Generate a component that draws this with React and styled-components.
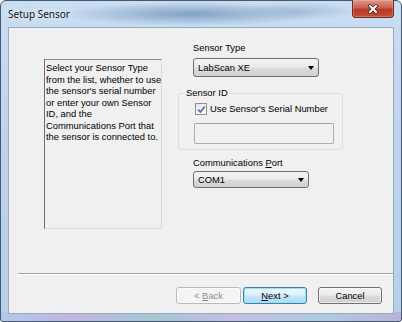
import styled, { createGlobalStyle } from "styled-components";

const GlobalStyle = createGlobalStyle`
  html, body {
    margin: 0;
    padding: 0;
    background: #ffffff;
  }
  body {
    width: 402px;
    height: 322px;
    overflow: hidden;
    font-family: "Liberation Sans", Arial, sans-serif;
  }
`;

const Window = styled.div`
  box-sizing: border-box;
  width: 402px;
  height: 322px;
  border: 1px solid #46586d;
  border-radius: 6px 6px 3px 3px;
  padding: 0 7px 7px 7px;
  display: flex;
  flex-direction: column;
  background:
    linear-gradient(90deg, #b3c8e9, #c0b6e0 18%, #a4c6d3 38%, #c5bde3 58%, #aecddf 78%, #bcb2dd) bottom / 100% 9px no-repeat,
    radial-gradient(ellipse 130px 12px at 190px 13px, rgba(100, 135, 172, 0.7), rgba(100, 135, 172, 0)),
    radial-gradient(ellipse 60px 9px at 300px 10px, rgba(120, 150, 185, 0.4), rgba(120, 150, 185, 0)),
    linear-gradient(180deg, #cadef3, #bed4ed 40%, #b7cfe9);
`;

const TitleBar = styled.div`
  height: 26px;
  display: flex;
  align-items: flex-start;
`;

const Title = styled.div`
  padding-top: 6px;
  font-family: "Noto Sans", "Liberation Sans", sans-serif;
  font-size: 10px;
  color: #161616;
  text-shadow: 0 0 6px rgba(255, 255, 255, 0.9);
`;

const CloseButton = styled.div`
  margin-left: auto;
  margin-top: -1px;
  width: 42px;
  height: 18px;
  box-sizing: border-box;
  border: 1px solid #6b2a22;
  border-top: none;
  border-radius: 0 0 4px 4px;
  background: linear-gradient(180deg, #dc9a90 0%, #c9604f 45%, #b83a28 55%, #c44f37 100%);
  box-shadow: inset 0 0 0 1px rgba(255, 200, 190, 0.3);
  display: flex;
  align-items: center;
  justify-content: center;
`;

const Client = styled.div`
  flex: 1;
  display: flex;
  flex-direction: column;
  background: #f0f0f0;
  border: 1px solid #98aabd;
`;

const Body = styled.div`
  flex: 1;
  display: flex;
  align-items: flex-start;
`;

const InfoBox = styled.div`
  box-sizing: border-box;
  margin: 31px 0 0 35px;
  width: 118px;
  height: 170px;
  padding: 2px 1px;
  border-top: 1px solid #8a8a8a;
  border-left: 1px solid #6e6e6e;
  border-right: 1px solid #dadada;
  border-bottom: 1px solid #dadada;
  font-size: 9.4px;
  line-height: 11.5px;
  color: #000;
  white-space: nowrap;
`;

const RightColumn = styled.div`
  margin-left: 16px;
  padding-top: 14px;
  display: flex;
  flex-direction: column;
  align-items: flex-start;
`;

const Label = styled.div`
  margin-left: 15px;
  margin-top: ${(p) => p.$top || 0}px;
  font-size: 9.4px;
  line-height: 12px;
  color: #000;
`;

const Combo = styled.div`
  box-sizing: border-box;
  margin-left: 15px;
  margin-top: ${(p) => p.$top || 0}px;
  width: ${(p) => p.$w}px;
  height: ${(p) => p.$h}px;
  padding: 0 4px 0 4px;
  border: 1px solid #707070;
  border-radius: 3px;
  background: linear-gradient(180deg, #f3f3f3 0%, #ebebeb 48%, #dddddd 52%, #cfcfcf 100%);
  display: flex;
  align-items: center;
  justify-content: space-between;
  font-size: 9.4px;
  color: #000;
`;

const Arrow = styled.span`
  width: 0;
  height: 0;
  border-left: 3.5px solid transparent;
  border-right: 3.5px solid transparent;
  border-top: 4px solid #000;
`;

const Group = styled.fieldset`
  box-sizing: border-box;
  margin: 10px 0 0 0;
  padding: 0 0 5px 15px;
  width: 165px;
  border: 1px solid #d5dfe5;
  border-radius: 3px;
  min-width: 0;
`;

const Legend = styled.legend`
  padding: 0 1px;
  margin-left: -9px;
  font-size: 9.4px;
  line-height: 12px;
  color: #000;
`;

const CheckRow = styled.label`
  margin-top: 4px;
  margin-left: 1px;
  display: flex;
  align-items: center;
  gap: 3px;
  font-size: 9.4px;
  line-height: 12px;
  color: #000;
`;

const CheckBox = styled.span`
  box-sizing: border-box;
  width: 12px;
  height: 12px;
  border: 1px solid #8e8f8f;
  background: linear-gradient(135deg, #e3e3e3, #ffffff);
  display: flex;
  align-items: center;
  justify-content: center;
`;

const TextField = styled.div`
  box-sizing: border-box;
  margin-top: 8px;
  width: 140px;
  height: 21px;
  border: 1px solid #abadb3;
  border-top-color: #a0a3aa;
  border-radius: 2px;
  background: #f0f0f0;
`;

const Separator = styled.div`
  margin-left: 9px;
  height: 1px;
  background: #a0a0a0;
  border-bottom: 1px solid #ffffff;
`;

const ButtonRow = styled.div`
  display: flex;
  justify-content: flex-end;
  gap: 2px;
  padding: 12px 11px 9px 0;
`;

const Button = styled.div`
  box-sizing: border-box;
  width: ${(p) => p.$w}px;
  height: 17px;
  margin-left: ${(p) => p.$gap || 0}px;
  border-radius: 3px;
  display: flex;
  align-items: center;
  justify-content: center;
  font-size: 9.4px;
  border: 1px solid ${(p) => (p.$default ? "#3c7fb1" : p.$disabled ? "#b7bbbe" : "#707070")};
  color: ${(p) => (p.$disabled ? "#8f8f8f" : "#000")};
  background: ${(p) =>
    p.$default
      ? "linear-gradient(180deg, #ecf7fd 0%, #dcf1fc 48%, #c3e6fa 52%, #aedcf5 100%)"
      : p.$disabled
      ? "#f4f4f4"
      : "linear-gradient(180deg, #f3f3f3 0%, #ebebeb 48%, #dddddd 52%, #cfcfcf 100%)"};
  box-shadow: ${(p) => (p.$default ? "inset 0 0 0 1px #9fdcf8" : "inset 0 0 0 1px rgba(255,255,255,0.6)")};
`;

const lines = [
  "Select your Sensor Type",
  "from the list, whether to use",
  "the sensor's serial number",
  "or enter your own Sensor",
  "ID, and the",
  "Communications Port that",
  "the sensor is connected to.",
];

const CloseGlyph = () => (
  <svg width="12" height="10" viewBox="0 0 12 10">
    <path d="M3 2 L9 8 M9 2 L3 8" stroke="#5a1e16" strokeWidth="3.6" strokeLinecap="square" />
    <path d="M3 2 L9 8 M9 2 L3 8" stroke="#ffffff" strokeWidth="2" strokeLinecap="square" />
  </svg>
);

const CheckMark = () => (
  <svg width="9" height="9" viewBox="0 0 9 9">
    <path d="M1.2 4.6 L3.4 7 L7.8 1.4" fill="none" stroke="#5068a3" strokeWidth="1.6" />
  </svg>
);

export default function App() {
  return (
    <>
      <GlobalStyle />
      <Window>
        <TitleBar>
          <Title>Setup Sensor</Title>
          <CloseButton>
            <CloseGlyph />
          </CloseButton>
        </TitleBar>
        <Client>
          <Body>
            <InfoBox>
              {lines.map((l) => (
                <div key={l}>{l}</div>
              ))}
            </InfoBox>
            <RightColumn>
              <Label>Sensor Type</Label>
              <Combo $top={4} $w={126} $h={19}>
                LabScan XE
                <Arrow />
              </Combo>
              <Group>
                <Legend>Sensor ID</Legend>
                <CheckRow>
                  <CheckBox>
                    <CheckMark />
                  </CheckBox>
                  Use Sensor's Serial Number
                </CheckRow>
                <TextField />
              </Group>
              <Label $top={7}>
                Communications <u>P</u>ort
              </Label>
              <Combo $top={2} $w={116} $h={17}>
                COM1
                <Arrow />
              </Combo>
            </RightColumn>
          </Body>
          <Separator />
          <ButtonRow>
            <Button $w={65} $disabled>
              &lt;&nbsp;<u>B</u>ack
            </Button>
            <Button $w={64} $default>
              <u>N</u>ext &gt;
            </Button>
            <Button $w={64} $gap={9}>
              Cancel
            </Button>
          </ButtonRow>
        </Client>
      </Window>
    </>
  );
}
